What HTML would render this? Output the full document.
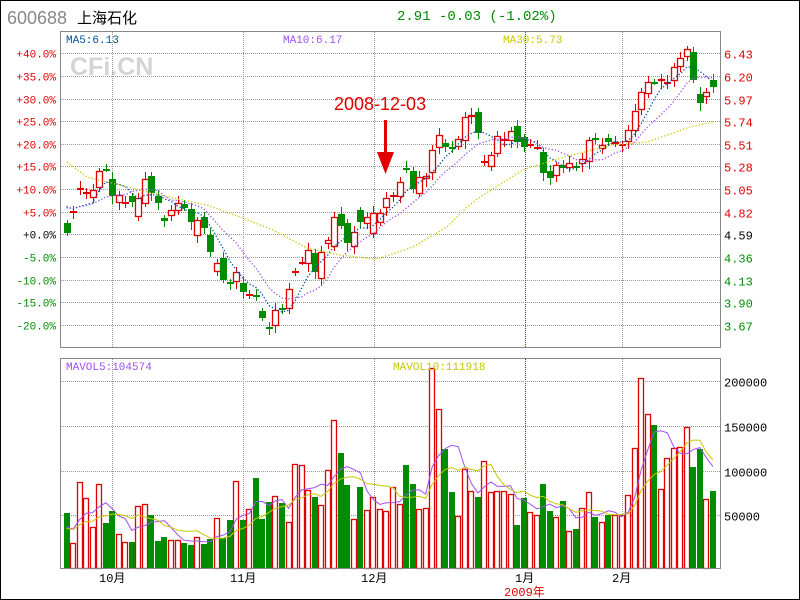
<!DOCTYPE html>
<html><head><meta charset="utf-8"><style>
html,body{margin:0;padding:0;background:#fff;width:800px;height:600px;overflow:hidden}
svg{display:block}
text{font-family:"Liberation Mono","Noto Sans CJK SC",monospace;font-size:12px}
</style></head><body>
<svg id="s" width="800" height="600" xmlns="http://www.w3.org/2000/svg">
<rect x="0.5" y="0.5" width="799" height="599" fill="#fff" stroke="#000"/>
<text x="7" y="24" style="font-family:'Liberation Sans',sans-serif;font-size:18px" fill="#888">600688</text>
<text x="77" y="23" style="font-family:'Liberation Sans','Noto Sans CJK SC',sans-serif;font-size:15px" fill="#000">上海石化</text>
<text x="397" y="20" style="font-size:14px" fill="#008c00">2.91 -0.03 (-1.02%)</text>
<text x="70" y="75" style="font-family:'Liberation Sans',sans-serif;font-size:25px;font-weight:bold" fill="#d4d4d4">CFi.CN</text>
<g id="g"></g>
<text x="66" y="43" fill="#00509a" style="font-size:11px">MA5:6.13</text>
<text x="283" y="43" fill="#a050f0" style="font-size:11px">MA10:6.17</text>
<text x="503" y="43" fill="#c8c800" style="font-size:11px">MA30:5.73</text>
<text x="66" y="370" fill="#a050f0" style="font-size:11px">MAVOL5:104574</text>
<text x="393" y="370" fill="#c8c800" style="font-size:11px">MAVOL10:111918</text>
<text x="334" y="110" fill="#e00000" style="font-family:'Liberation Sans',sans-serif;font-size:18px">2008-12-03</text>
<rect x="384" y="120" width="3" height="40" fill="#e00000"/>
<polygon points="377,152 394,152 385.5,174" fill="#e00000"/>
<g style="font-size:12px" fill="#000">
<text x="99" y="582">10月</text><text x="230" y="582">11月</text><text x="361" y="582">12月</text><text x="515" y="582">1月</text><text x="612" y="582">2月</text>
</g>
<text x="504" y="596" fill="#e00000" style="font-size:12px">2009年</text>
</svg>
<script>
var g=document.getElementById('g');var h='';
function L(x1,y1,x2,y2,c,d){h+='<line x1="'+x1+'" y1="'+y1+'" x2="'+x2+'" y2="'+y2+'" stroke="'+c+'" stroke-width="1"'+(d?' stroke-dasharray="'+d+'"':'')+'/>';}
var pl=['+40.0%','+35.0%','+30.0%','+25.0%','+20.0%','+15.0%','+10.0%','+5.0%','+0.0%','-5.0%','-10.0%','-15.0%','-20.0%'];
var pr=['6.43','6.20','5.97','5.74','5.51','5.28','5.05','4.82','4.59','4.36','4.13','3.90','3.67'];
for(var k=0;k<13;k++){var y=Math.round(53.3+k*22.62)+0.5;L(61,y,720,y,'#999','1,1');
var c=k<8?'#e00000':(k==8?'#000':'#008c00');
h+='<text x="'+(56)+'" y="'+(y+4)+'" text-anchor="end" fill="'+c+'" style="font-size:11px">'+pl[k]+'</text>';
h+='<text x="724" y="'+(y+5)+'" fill="'+c+'" style="font-size:12px">'+pr[k]+'</text>';}
var vx=[112,243,374,622];
vx.forEach(function(x){L(x+.5,32,x+.5,347,'#999','1,1');L(x+.5,359,x+.5,568,'#999','1,1');});
L(525.5,32,525.5,347,'#e00000','1,1');L(525.5,359,525.5,568,'#e00000','1,1');
var vl=['200000','150000','100000','50000'];
for(k=0;k<4;k++){var y=Math.round(381+k*44.8)+0.5;L(61,y,720,y,'#999','1,1');h+='<text x="724" y="'+(y+5)+'" fill="#000" style="font-size:12px">'+vl[k]+'</text>';}
var C=[[223,233,0],[211,211,1],[188,188,1],[192,193,1],[190,198,1],[171,188,1],[169,169,0],[179,196,0],[195,203,1],[202,202,1],[196,202,0],[198,217,1],[179,204,1],[176,193,0],[196,203,0],[218,221,0],[210,216,1],[203,211,1],[204,208,0],[209,222,0],[220,236,1],[217,228,0],[235,252,0],[263,272,1],[258,280,0],[282,282,0],[272,282,1],[283,292,0],[294,294,1],[295,297,0],[311,318,0],[327,327,0],[310,326,1],[308,308,0],[289,309,1],[271,272,1],[262,262,1],[250,264,1],[253,272,0],[252,279,1],[240,244,1],[217,247,1],[214,226,0],[223,243,0],[232,247,1],[210,222,0],[217,224,1],[213,234,1],[213,223,1],[198,208,1],[195,195,1],[182,197,1],[168,168,0],[171,189,0],[177,194,1],[176,179,1],[150,173,1],[135,148,1],[143,147,0],[147,149,0],[139,147,1],[117,141,1],[115,117,1],[112,133,0],[161,161,1],[155,167,1],[136,154,1],[139,139,1],[131,141,1],[126,142,0],[137,147,0],[144,144,1],[147,147,1],[152,173,0],[171,178,0],[165,176,1],[165,168,0],[163,168,1],[166,168,0],[159,164,1],[140,162,1],[138,138,0],[145,149,1],[138,142,0],[142,144,1],[144,144,1],[130,142,1],[111,131,1],[92,110,1],[82,94,1],[82,82,0],[79,81,1],[82,82,1],[67,81,1],[58,67,1],[49,57,1],[52,80,0],[94,103,0],[92,97,1],[80,87,0]];
var V=[513,543,482,498,527,484,523,511,534,542,542,506,504,515,541,537,540,540,543,545,537,544,539,518,538,520,481,520,509,478,519,502,496,503,522,464,465,490,497,505,470,420,453,485,519,487,510,497,509,511,487,504,465,484,509,508,368,409,449,492,516,469,491,497,461,492,491,491,494,525,498,512,515,484,511,517,501,531,529,508,492,517,522,515,515,515,495,448,378,414,425,489,458,448,447,427,467,449,499,491];
function X(i){return 66.5+i*6.53;}
var RED='#e00000',GRN='#008c00';
for(var i=0;i<100;i++){var x=Math.round(X(i)),c=C[i],col=c[2]?RED:GRN;
var w1=3+((i*7)%5),w2=3+((i*11)%6);
L(x+.5,c[0]-w1,x+.5,c[1]+w2,col);
if(c[1]-c[0]<2){h+='<rect x="'+(x-3)+'" y="'+c[0]+'" width="7" height="2" fill="'+col+'"/>';}
else if(c[2]){h+='<rect x="'+(x-2.5)+'" y="'+(c[0]+.5)+'" width="6" height="'+(c[1]-c[0]-1)+'" fill="#fff" stroke="'+RED+'" stroke-width="1.3"/>';}
else{h+='<rect x="'+(x-3)+'" y="'+c[0]+'" width="7" height="'+(c[1]-c[0])+'" fill="'+GRN+'"/>';}
var vt=V[i];
if(C[i][2])h+='<rect x="'+(x-2.5)+'" y="'+(vt+.5)+'" width="5" height="'+(568-vt)+'" fill="#fff" stroke="'+RED+'" stroke-width="1.3"/>';
else h+='<rect x="'+(x-3)+'" y="'+vt+'" width="6" height="'+(569-vt)+'" fill="'+GRN+'"/>';}
function ma(arr,n,pad){var o=[];for(var i=0;i<arr.length;i++){var s=0;for(var j=i-n+1;j<=i;j++)s+=j<0?pad:arr[j];o.push(s/n);}return o;}
var cl=C.map(function(c,i){return c[2]?c[0]:c[1];});
function pts(a){return a.map(function(v,i){return X(i).toFixed(1)+','+v.toFixed(1);}).join(' ');}
h+='<polyline points="'+pts(ma(cl,5,200))+'" fill="none" stroke="#00509a" stroke-width="1.3" stroke-dasharray="1.3,2"/>';
h+='<polyline points="'+pts(ma(cl,10,205))+'" fill="none" stroke="#a050f0" stroke-width="1.3" stroke-dasharray="1.3,2"/>';
h+='<polyline points="67,162 87,177 107,182 140,190 173,198 207,205 240,217 273,230 307,248 340,255 373,259 380,258 413,247 447,227 467,207 480,197 507,180 523,170 547,162 580,153 613,145 647,142 673,133 690,127 713,122" fill="none" stroke="#c8c800" stroke-width="1.3" stroke-dasharray="1.3,2"/>';
h+='<polyline points="'+pts(ma(V,5,530))+'" fill="none" stroke="#a050f0"/>';
h+='<polyline points="'+pts(ma(V,10,530))+'" fill="none" stroke="#c8c800"/>';
h+='<rect x="60.5" y="31.5" width="660" height="316" fill="none" stroke="#888"/>';
h+='<rect x="60.5" y="358.5" width="660" height="210" fill="none" stroke="#888"/>';
g.innerHTML=h;
</script>
</body></html>
